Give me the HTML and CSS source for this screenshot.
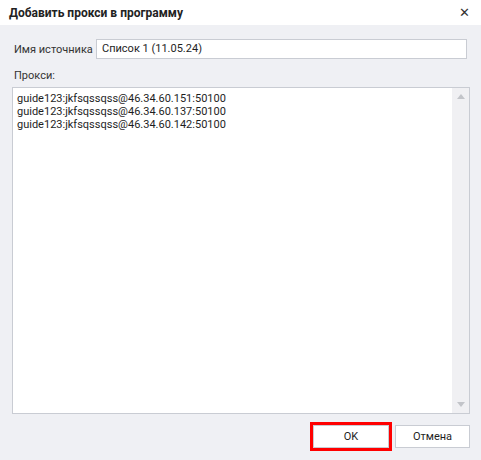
FILE: index.html
```html
<!DOCTYPE html>
<html lang="ru">
<head>
    <meta charset="UTF-8">
    <title>Добавить прокси в программу</title>
    <link rel="stylesheet" href="styles.css">
</head>
<body>
    <div class="dialog">
        <div class="titlebar">
            <span class="title">Добавить прокси в программу</span>
            <span class="close">&#x2715;</span>
        </div>
        <div class="content">
            <div class="row">
                <label class="label">Имя источника</label>
                <div class="input">Список 1 (11.05.24)</div>
            </div>
            <div class="label proxy-label">Прокси:</div>
            <div class="memo">
                <div class="lines">
                    <div>guide123:jkfsqssqss@46.34.60.151:50100</div>
                    <div>guide123:jkfsqssqss@46.34.60.137:50100</div>
                    <div>guide123:jkfsqssqss@46.34.60.142:50100</div>
                </div>
                <div class="scrollbar">
                    <span class="arrow up"></span>
                    <span class="arrow down"></span>
                </div>
            </div>
            <div class="buttons">
                <button class="btn primary">OK</button>
                <button class="btn">Отмена</button>
            </div>
        </div>
    </div>
</body>
</html>
```

FILE: styles.css
```css
body {
    margin: 0;
    font-family: Roboto, "DejaVu Sans", sans-serif;
    font-size: 11px;
    color: #1e1e1e;
    background: #eff0f4;
}
.dialog {
    width: 481px;
    height: 460px;
    display: flex;
    flex-direction: column;
}
.titlebar {
    height: 25px;
    background: #fff;
    display: flex;
    align-items: center;
    justify-content: space-between;
    padding: 0 11px 0 9px;
}
.title {
    font-weight: bold;
    font-size: 12px;
    color: #222;
}
.close {
    font-size: 13px;
    font-weight: bold;
    color: #333;
}
.content {
    flex: 1;
    padding: 14px 11px 0 12px;
    display: flex;
    flex-direction: column;
}
.row {
    display: flex;
    align-items: center;
    padding-left: 2px;
}
.label {
    color: #333;
}
.row .label {
    width: 82px;
}
.input {
    flex: 1;
    height: 18px;
    line-height: 18px;
    margin-right: 3px;
    border: 1px solid #c9ccd3;
    background: #fff;
    padding-left: 5px;
}
.proxy-label {
    margin: 10px 0 5px 2px;
}
.memo {
    height: 325px;
    border: 1px solid #c9ccd3;
    background: #fff;
    display: flex;
}
.lines {
    flex: 1;
    padding: 4px 4px;
    line-height: 13px;
}
.scrollbar {
    width: 17px;
    background: #f0f0f3;
    display: flex;
    flex-direction: column;
    justify-content: space-between;
    align-items: center;
    padding: 6px 0;
}
.arrow {
    width: 0;
    height: 0;
    border-left: 4px solid transparent;
    border-right: 4px solid transparent;
}
.arrow.up {
    border-bottom: 5px solid #c2c4c9;
}
.arrow.down {
    border-top: 5px solid #c2c4c9;
}
.buttons {
    display: flex;
    justify-content: flex-end;
    gap: 6px;
    margin-top: 11px;
}
.btn {
    width: 75px;
    height: 23px;
    font: inherit;
    color: #1e1e1e;
    background: #fff;
    border: 1px solid #c9ccd3;
}
.btn.primary {
    width: 76px;
    outline: 3px solid #ff0000;
}
```
